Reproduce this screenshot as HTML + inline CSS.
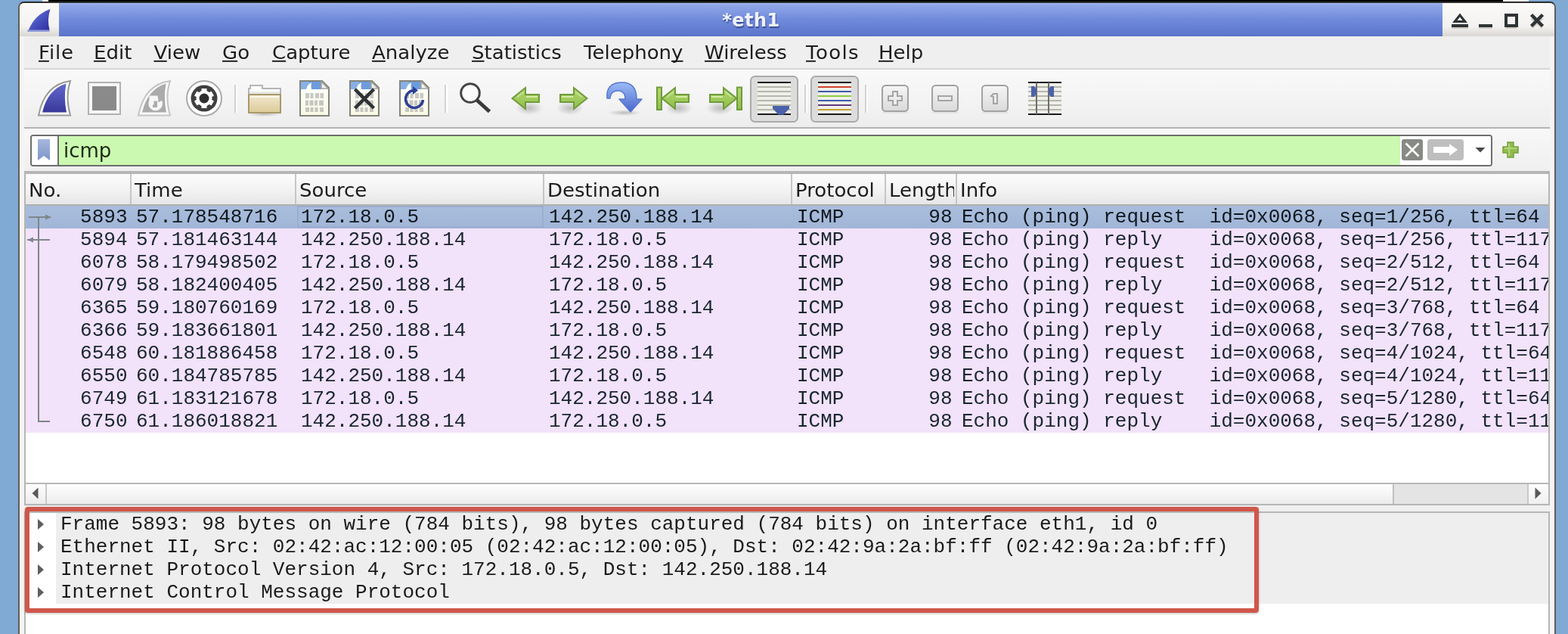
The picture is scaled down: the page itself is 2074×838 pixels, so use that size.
<!DOCTYPE html>
<html lang="en">
<head>
<meta charset="utf-8">
<title>*eth1</title>
<style>
html,body{margin:0;padding:0}
body{width:2074px;height:838px;overflow:hidden;position:relative;background:#80a9d3;font-family:"DejaVu Sans","Liberation Sans",sans-serif;font-size:26px;color:#1a1a1a;font-variant-ligatures:none}
i{display:block;position:absolute;font-style:normal}
u{text-decoration:underline;text-decoration-thickness:2px;text-underline-offset:2px;text-decoration-skip-ink:none}
.deskbits .blk{left:64px;top:0;width:1924px;height:4px;background:#000}
.deskbits .w1{left:56px;top:0;width:8px;height:3px;background:#f4f4f4}
.deskbits .w2{left:1988px;top:0;width:34px;height:3px;background:#eee}
.win{position:absolute;left:24px;top:2px;width:2034px;height:850px;box-sizing:border-box;border:2px solid #605e59;border-top-color:#2c2c2c;border-radius:8px 8px 0 0;background:#f5f4f2;overflow:hidden}
/* inside .win the origin is x=26,y=4 in page coords */
.title{position:absolute;left:0;top:0;width:2030px;height:44px;background:linear-gradient(#fbfaf9,#f3f2f0 70%,#d9d7d3)}
.ticon{position:absolute;left:0;top:0;width:52px;height:44px}
.tgrad{position:absolute;left:52px;top:0;width:1830px;height:44px;background:linear-gradient(#a6b9f0 0,#90a7e7 6%,#708adb 50%,#5c77cb 95%,#5570c3 100%)}
.ttext{position:absolute;left:0;width:1830px;top:9px;text-align:center;font-weight:bold;font-size:24px;line-height:28px;color:rgba(255,255,255,.92);text-shadow:1px 2px 1px #3b4f9a;letter-spacing:.5px;text-indent:1px}
.tbtns{position:absolute;left:1882px;top:0;width:148px;height:44px}
.menubar{position:absolute;left:6px;top:44px;width:2018px;height:42px;background:#efefef;border-bottom:2px solid #d6d6d6}
.mi{position:absolute;top:6px;line-height:30px;white-space:nowrap;color:#1c1c1c;transform:scaleY(.95);transform-origin:0 24px}
.toolbar{position:absolute;left:6px;top:88px;width:2018px;height:76px;background:linear-gradient(#f9f9f9,#f4f4f4 50%,#ededed);border-bottom:2px solid #b4b4b4}
.filterbar{position:absolute;left:6px;top:166px;width:2018px;height:56px;background:linear-gradient(#f8f8f8,#efefef)}
.fbox{position:absolute;left:8px;top:8px;width:1934px;height:42px;box-sizing:border-box;border:2px solid #6e6e6e;border-radius:4px;background:#fff;overflow:hidden}
.fbm{position:absolute;left:0;top:0;width:36px;height:38px;background:#fff}
.ftext{position:absolute;left:36px;top:0;width:1774px;height:38px;background:#ccf9b1;line-height:38px;text-indent:6px;color:#1c2a12}
.fright{position:absolute;left:1810px;top:0;width:120px;height:38px;background:#fff}
.plist{position:absolute;left:6px;top:222px;width:2018px;height:442px;box-sizing:border-box;border:2px solid #b6b6b6;border-top-width:4px;background:#fff;overflow:hidden}
.phead{position:absolute;left:0;top:0;width:2014px;height:40px;background:linear-gradient(#fcfcfc,#f2f2f2 55%,#e6e6e6);border-bottom:2px solid #b0b0ae}
.hc{position:absolute;top:6px;letter-spacing:0;margin-left:-1px;line-height:30px;white-space:nowrap;color:#1c1c1c;transform:scaleY(.95);transform-origin:0 24px}
.hs{top:0;width:2px;height:40px;background:#c6c6c6}
.prows{position:absolute;left:0;top:42px;width:2014px;height:370px;font-family:"Liberation Mono","DejaVu Sans Mono",monospace;font-size:26px;color:#18262e}
.pr{position:absolute;left:0;width:2014px;height:30px;background:#f2e2fa;white-space:pre;overflow:hidden}
.pr.sel{background:linear-gradient(#a9bddc,#a1b6d7);color:#10181e}
.c{position:absolute;top:0;line-height:30px;white-space:pre}
.no{left:0;width:134.500px;text-align:right}
.tm{left:146px}
.sr{left:364px}
.ds{left:692px}
.pt{left:1020px}
.ln{left:1138px;width:87.500px;text-align:right}
.inf{left:1238px}
.focus{position:absolute;left:359px;top:0;width:326px;height:29px;box-sizing:border-box;border:2px solid #9aaed0;background:transparent}
.rel{position:absolute;left:0;top:0}
.hscroll{position:absolute;left:0;top:408px;width:2014px;height:26px;border-top:2px solid #b8b8b8;background:linear-gradient(#fdfdfd,#f4f4f4 60%,#ebebeb)}
.hscroll .sl{position:absolute;left:0;top:0;width:26px;height:26px;border-right:2px solid #c8c8c8}
.hscroll .str{position:absolute;left:1808px;top:0;width:178px;height:26px;background:#e4e4e4;border-left:2px solid #c0c0c0;box-sizing:border-box}
.hscroll .srb{position:absolute;left:1986px;top:0;width:28px;height:26px;border-left:2px solid #c8c8c8;box-sizing:border-box;background:linear-gradient(#fdfdfd,#f0f0f0)}
.pdet{position:absolute;left:6px;top:672px;width:2018px;height:200px;box-sizing:border-box;border:2px solid #b6b6b6;background:#fff;overflow:hidden;font-family:"Liberation Mono","DejaVu Sans Mono",monospace;font-size:26px;color:#1a1a1a}
.dr{position:absolute;left:0;width:2014px;height:30px;white-space:pre}
.dr .dt{position:absolute;left:40px;top:0;width:1974px;height:30px;line-height:30px;background:#eee;text-indent:6px}
.tri{left:16px;top:7.500px;width:0;height:0;border-left:8px solid #5e5e5e;border-top:7.500px solid transparent;border-bottom:7.500px solid transparent}
.redbox{position:absolute;left:33px;top:670px;width:1632px;height:140px;box-sizing:border-box;border:6px solid #cf574a;border-radius:4px;box-shadow:0 1px 3px rgba(0,0,0,.25)}
.tb{position:absolute;left:0;top:0}
.ticon svg,.tbtns svg,.fbm svg,.fright svg{position:absolute;left:0;top:0}
.fplus{position:absolute;left:1952px;top:14px;width:28px;height:28px}
.fbm{border-right:2px solid #707070;width:34px !important}
.scr{position:absolute;left:0;top:0;width:2074px;height:838px;will-change:transform}
.desk{position:absolute;left:-30px;top:-30px;width:2134px;height:898px;background:#80a9d3}
.deskbits .blk{top:-30px !important;height:34px !important}
.deskbits .w1,.deskbits .w2{top:-30px !important;height:33px !important}
.cbg{position:absolute;left:6px;top:44px;width:2018px;height:900px;background:#efefef}
.hscroll svg{position:absolute;left:0;top:0}
</style>
</head>
<body>
<div class="scr">
<div class="desk"></div>
<div class="deskbits"><i class="blk"></i><i class="w1"></i><i class="w2"></i></div>
<div class="win">
<div class="cbg"></div>
<div class="title"><div class="ticon"><svg width="52" height="44" viewBox="26 4 52 44"><defs><linearGradient id="gtf" x1="0" y1="0" x2="1" y2="1"><stop offset="0" stop-color="#7a8ee0"/><stop offset=".5" stop-color="#4a54c0"/><stop offset="1" stop-color="#2e2e9c"/></linearGradient></defs><path d="M37 39H65.500V42H36Z" fill="#8f9cd8"/><path d="M38 39.500Q46 19 66.500 12Q62 26 65.500 39.500Z" fill="url(#gtf)"/></svg></div><div class="tgrad"><span class="ttext">*eth1</span></div><div class="tbtns"><svg width="148" height="44" viewBox="1908 4 148 44"><g fill="none" stroke="#cfcbc4" stroke-width="4"><path d="M1920 36h22M1956 36h18M1992 36h14M2026 24l14 12M2040 24l-14 12"/></g><g fill="none" stroke="#2e3436" stroke-width="4"><path d="M1920 34h22M1956 34h18"/><rect x="1992" y="20" width="14" height="14"/><path d="M1921 30L1931 17.500L1941 30ZM1927.500 27L1931 22.500L1934.500 27Z" fill="#2e3436" fill-rule="evenodd" stroke="none"/><path d="M2025.500 19.500l15 15M2040.500 19.500l-15 15" stroke-width="4.500"/></g></svg></div></div>
<div class="menubar">
<span class="mi" style="left:18px;letter-spacing:.8px;margin-left:1px"><u>F</u>ile</span>
<span class="mi" style="left:92px"><u>E</u>dit</span>
<span class="mi" style="left:170px;margin-left:1.5px"><u>V</u>iew</span>
<span class="mi" style="left:262px"><u>G</u>o</span>
<span class="mi" style="left:328px"><u>C</u>apture</span>
<span class="mi" style="left:460px"><u>A</u>nalyze</span>
<span class="mi" style="left:592px"><u>S</u>tatistics</span>
<span class="mi" style="left:740px">Telephon<u>y</u></span>
<span class="mi" style="left:900px"><u>W</u>ireless</span>
<span class="mi" style="left:1034px;letter-spacing:1.4px"><u>T</u>ools</span>
<span class="mi" style="left:1130px"><u>H</u>elp</span>
</div>
<div class="toolbar">
<svg class="tb" width="2018" height="76" viewBox="32 92 2018 76">
<defs>
<linearGradient id="gfin" x1="0" y1="0" x2="0" y2="1"><stop offset="0" stop-color="#6468cc"/><stop offset="1" stop-color="#38389a"/></linearGradient>
<linearGradient id="gfold" x1="0" y1="0" x2="0" y2="1"><stop offset="0" stop-color="#f1e8d0"/><stop offset="1" stop-color="#dccb98"/></linearGradient>
<linearGradient id="gdoc" x1="0" y1="0" x2="0" y2="1"><stop offset="0" stop-color="#ffffff"/><stop offset="1" stop-color="#f8f8e4"/></linearGradient>
<linearGradient id="ggrn" x1="0" y1="0" x2="0" y2="1"><stop offset="0" stop-color="#b4d872"/><stop offset="1" stop-color="#8fbe48"/></linearGradient>
<linearGradient id="gblu" x1="0" y1="0" x2="0" y2="1"><stop offset="0" stop-color="#9cbcf6"/><stop offset="1" stop-color="#4a66cc"/></linearGradient>
<linearGradient id="gbtn" x1="0" y1="0" x2="0" y2="1"><stop offset="0" stop-color="#f6f6f6"/><stop offset="1" stop-color="#dadada"/></linearGradient>
<radialGradient id="gsh"><stop offset="0" stop-color="#000" stop-opacity=".22"/><stop offset="1" stop-color="#000" stop-opacity="0"/></radialGradient>
<g id="doc"><path d="M1 1H30L39 10V47H1Z" fill="url(#gdoc)" stroke="#84847a" stroke-width="2" stroke-linejoin="miter"/><path d="M2 2H29V12H2Z" fill="#6d9cdc"/><path d="M2 2H13V12H2Z" fill="#86b0e6"/><path d="M9 12Q11 5 16 3Q15 8 16 12Z" fill="#fff"/><path d="M29 2V11H38Z" fill="#f4f4ee" stroke="#a4a49c" stroke-width="1.500"/><g fill="#9c9c9c" opacity=".55"><path d="M8 17h5v7H8zM14.500 17h4v7h-4zM21 17h5v7h-5zM27.500 17h4.500v7h-4.500zM8 26.500h4v7H8zM13.500 26.500h5v7h-5zM20 26.500h4v7h-4zM26 26.500h6v7h-6zM8 36h5v6H8zM14.500 36h4v6h-4zM20.500 36h4v6h-4zM27 36h5v6h-5z"/></g></g>
<g id="zb"><rect x="1" y="1" width="34" height="34" rx="4.500" fill="url(#gbtn)" stroke="#a2a2a2" stroke-width="2"/><path d="M1 37h34" stroke="#e4e4e4" stroke-width="2"/></g>
<g id="arr"><ellipse cx="24" cy="29" rx="18" ry="9" fill="url(#gsh)"/><path d="M1.500 16L19 2V11H37V21H19V30Z" fill="url(#ggrn)" stroke="#6f9b3c" stroke-width="2" stroke-linejoin="miter"/><path d="M20 14H35" stroke="#d4eaa8" stroke-width="2"/><path d="M16.500 7.500L8 14.500" stroke="#c4e092" stroke-width="2"/></g>
<g id="bar"><rect x="1" y="1.500" width="6" height="29.500" fill="url(#ggrn)" stroke="#6f9b3c" stroke-width="2"/></g>
<g id="glines" stroke="#b6b6aa" stroke-width="2"><path d="M0 7h44M0 13h44M0 19h44M0 25h44M0 31h44M0 37h44"/></g>
</defs>
<!-- 1 start capture fin -->
<path d="M51 152.500Q59 111.500 93 107Q86 128 93 152.500Z" fill="#fff" stroke="#9a9a9a" stroke-width="2" stroke-linejoin="miter"/>
<path d="M56 148.500Q63 118 87.500 110.500Q84 129 88 148.500Z" fill="url(#gfin)"/>
<!-- 2 stop -->
<rect x="117" y="109" width="42" height="42" fill="#f6f6f6" stroke="#b2b2b2" stroke-width="2"/>
<rect x="122" y="114" width="32" height="32" fill="#8a8a8a"/>
<!-- 3 restart (disabled) -->
<path d="M183 152.500Q191 111.500 225 107Q218 128 225 152.500Z" fill="#fafafa" stroke="#c4c4c4" stroke-width="2" stroke-linejoin="miter"/>
<path d="M188 148.500Q195 118 219.500 110.500Q216 129 220 148.500Z" fill="#ababab"/>
<circle cx="205.7" cy="137" r="9.3" fill="#f6f6f6"/>
<path d="M197.5 126.5H208.5V134H197.5Z" fill="#f6f6f6"/>
<path d="M203.5 133.5H208V142H202V138.5H203.5Z" fill="#ababab"/>
<path d="M209 127L214.5 132.5L209.5 135.5Z" fill="#ababab"/>
<!-- 4 options gear -->
<circle cx="270" cy="130" r="23" fill="#fff" stroke="#aaa" stroke-width="2"/>
<circle cx="270" cy="130" r="17.5" fill="#3f3f3f"/>
<g fill="#fff"><circle cx="270" cy="130" r="10.5"/><g id="teeth"><rect x="266.5" y="117" width="7" height="26"/><rect x="266.5" y="117" width="7" height="26" transform="rotate(60 270 130)"/><rect x="266.5" y="117" width="7" height="26" transform="rotate(120 270 130)"/></g></g>
<circle cx="270" cy="130" r="6.5" fill="#2e2e2e"/>
<!-- separators -->
<g><path d="M311 112V149M589 112V149M1065 112V149M1145 112V149" stroke="#d2d2d2" stroke-width="2"/><path d="M313 112V149M591 112V149M1067 112V149M1147 112V149" stroke="#fff" stroke-width="2"/></g>
<!-- 5 folder -->
<ellipse cx="350" cy="151" rx="22" ry="3" fill="url(#gsh)"/>
<path d="M329 126V117H331V113H347V117H371V126Z" fill="#fff" stroke="#b4b4bc" stroke-width="2"/><path d="M330 121H370V124H330Z" fill="#e9e9e9"/>
<rect x="329" y="125" width="42" height="24" fill="url(#gfold)" stroke="#a9996a" stroke-width="2"/>
<path d="M331 128H369" stroke="#faf5e8" stroke-width="2"/>
<!-- 6,7,8 docs -->
<use href="#doc" x="396" y="106"/>
<use href="#doc" x="462" y="106"/>
<use href="#doc" x="528" y="106"/>
<path d="M469.500 118L494.500 143M494.500 118L469.500 143" stroke="#2e3436" stroke-width="4.500"/>
<path d="M559.500 132A11.500 11.500 0 1 1 547 119.500" fill="none" stroke="#2d4096" stroke-width="3.500"/>
<path d="M546 114L553 119.500L546 125Z" fill="#2d4096"/>
<!-- 9 find -->
<circle cx="622" cy="123" r="12.300" fill="#fbfbfb" stroke="#444" stroke-width="3"/>
<path d="M631 132.500L647.500 147.500" stroke="#3a3a3a" stroke-width="5"/>
<!-- 10,11 back/forward -->
<use href="#arr" x="676" y="114"/>
<use href="#arr" transform="translate(778 114) scale(-1 1)"/>
<!-- 12 goto -->
<ellipse cx="826" cy="149" rx="22" ry="4" fill="url(#gsh)"/>
<path d="M803 130Q801 109 823 109Q842 109 842 131H849L834 148L819 131H827Q827 121 819 120Q808 119 807 130Z" fill="url(#gblu)" stroke="#5878d0" stroke-width="1.500" stroke-linejoin="round"/>
<!-- 13 first -->
<g transform="translate(874 114)"><use href="#arr"/></g>
<use href="#bar" x="868" y="114"/>
<!-- 14 last -->
<use href="#arr" transform="translate(976 114) scale(-1 1)"/>
<use href="#bar" x="974" y="114"/>
<!-- 15 autoscroll (pressed) -->
<rect x="993" y="101" width="62" height="60" rx="5.500" fill="#dcdcdc" stroke="#ababab" stroke-width="2"/>
<rect x="1002" y="108" width="44" height="44" fill="#efefeb"/>
<use href="#glines" x="1002" y="108"/>
<path d="M1002 109h44M1002 151h44" stroke="#1a1a1a" stroke-width="2"/>
<path d="M1022 140H1044V143.500L1036.500 151.500H1029.500L1022 143.500Z" fill="#4a62aa"/>
<!-- 16 colorize (pressed) -->
<rect x="1073" y="101" width="62" height="60" rx="5.500" fill="#dcdcdc" stroke="#ababab" stroke-width="2"/>
<rect x="1082" y="108" width="44" height="44" fill="#efefeb"/>
<g stroke-width="2"><path d="M1082 109h44M1082 151h44" stroke="#1a1a1a"/><path d="M1082 115h44" stroke="#d2452c"/><path d="M1082 121h44M1082 133h44" stroke="#3c5cac"/><path d="M1082 127h44" stroke="#8ecb3c"/><path d="M1082 139h44" stroke="#5e3c7c"/><path d="M1082 145h44" stroke="#c4a232"/></g>
<!-- 17,18,19 zoom -->
<use href="#zb" x="1166" y="112"/>
<use href="#zb" x="1232" y="112"/>
<use href="#zb" x="1298" y="112"/>
<path d="M1181 121H1187V127H1193V133H1187V139H1181V133H1175V127H1181Z" fill="#ececec" stroke="#a4a4a4" stroke-width="2"/>
<rect x="1241" y="127" width="18" height="6" fill="#ececec" stroke="#a4a4a4" stroke-width="2"/>
<path d="M1311 127L1314 124H1319V137H1314V128Z" fill="#ececec" stroke="#a4a4a4" stroke-width="2"/>
<!-- 20 resize columns -->
<rect x="1360" y="108" width="44" height="44" fill="#efefeb"/>
<use href="#glines" x="1360" y="108"/>
<path d="M1360 109h44M1360 151h44" stroke="#1a1a1a" stroke-width="2"/>
<path d="M1371 109V151M1387 109V151" stroke="#6e6e66" stroke-width="2"/>
<path d="M1364 114H1368L1371 118V124L1368 128H1364ZM1394 114H1390L1387 118V124L1390 128H1394Z" fill="#4a62aa"/>
</svg>
</div>
<div class="filterbar"><div class="fbox"><div class="fbm"><svg width="36" height="38" viewBox="42 180 36 38"><defs><linearGradient id="gbm" x1="0" y1="0" x2="0" y2="1"><stop offset="0" stop-color="#a8b6de"/><stop offset="1" stop-color="#7c96c8"/></linearGradient></defs><path d="M50 184H66V212L58 206L50 212Z" fill="url(#gbm)"/></svg></div><div class="ftext">icmp</div><div class="fright"><svg width="120" height="38" viewBox="1852 180 120 38"><rect x="1854" y="184" width="28" height="28" rx="3" fill="#888a85"/><path d="M1859.500 189.500L1876.500 206.500M1876.500 189.500L1859.500 206.500" stroke="#fff" stroke-width="2.600"/><rect x="1888" y="184" width="48" height="28" rx="4" fill="#bebebe"/><path d="M1896 194H1917V190L1928 198L1917 206V202H1896Z" fill="#fff"/><path d="M1951.500 195H1964.500L1958 201.500Z" fill="#4a4a4a"/></svg></div></div><div class="fplus"><svg width="28" height="28" viewBox="1984 184 28 28"><path d="M1994 188H2002V194H2008V202H2002V208H1994V202H1988V194H1994Z" fill="#90bc4c" stroke="#78a23e" stroke-width="1.500"/><path d="M1996 190V206M1990 196H2006" stroke="#b4d67c" stroke-width="2"/></svg></div></div>
<div class="plist">
<div class="phead">
<span class="hc" style="left:5px">No.</span>
<span class="hc" style="left:145px">Time</span>
<span class="hc" style="left:363px">Source</span>
<span class="hc" style="left:691px">Destination</span>
<span class="hc" style="left:1019px">Protocol</span>
<span class="hc" style="left:1143px;width:86px;overflow:hidden">Length</span>
<span class="hc" style="left:1237px">Info</span>
<i class="hs" style="left:138px"></i>
<i class="hs" style="left:356px"></i>
<i class="hs" style="left:684px"></i>
<i class="hs" style="left:1012px"></i>
<i class="hs" style="left:1136px"></i>
<i class="hs" style="left:1230px"></i>
</div>
<div class="prows">
<div class="pr sel" style="top:0px"><span class="c no">5893</span><span class="c tm">57.178548716</span><span class="c sr">172.18.0.5</span><span class="c ds">142.250.188.14</span><span class="c pt">ICMP</span><span class="c ln">98</span><span class="c inf">Echo (ping) request  id=0x0068, seq=1/256, ttl=64</span></div>
<div class="pr" style="top:30px"><span class="c no">5894</span><span class="c tm">57.181463144</span><span class="c sr">142.250.188.14</span><span class="c ds">172.18.0.5</span><span class="c pt">ICMP</span><span class="c ln">98</span><span class="c inf">Echo (ping) reply    id=0x0068, seq=1/256, ttl=117</span></div>
<div class="pr" style="top:60px"><span class="c no">6078</span><span class="c tm">58.179498502</span><span class="c sr">172.18.0.5</span><span class="c ds">142.250.188.14</span><span class="c pt">ICMP</span><span class="c ln">98</span><span class="c inf">Echo (ping) request  id=0x0068, seq=2/512, ttl=64</span></div>
<div class="pr" style="top:90px"><span class="c no">6079</span><span class="c tm">58.182400405</span><span class="c sr">142.250.188.14</span><span class="c ds">172.18.0.5</span><span class="c pt">ICMP</span><span class="c ln">98</span><span class="c inf">Echo (ping) reply    id=0x0068, seq=2/512, ttl=117</span></div>
<div class="pr" style="top:120px"><span class="c no">6365</span><span class="c tm">59.180760169</span><span class="c sr">172.18.0.5</span><span class="c ds">142.250.188.14</span><span class="c pt">ICMP</span><span class="c ln">98</span><span class="c inf">Echo (ping) request  id=0x0068, seq=3/768, ttl=64</span></div>
<div class="pr" style="top:150px"><span class="c no">6366</span><span class="c tm">59.183661801</span><span class="c sr">142.250.188.14</span><span class="c ds">172.18.0.5</span><span class="c pt">ICMP</span><span class="c ln">98</span><span class="c inf">Echo (ping) reply    id=0x0068, seq=3/768, ttl=117</span></div>
<div class="pr" style="top:180px"><span class="c no">6548</span><span class="c tm">60.181886458</span><span class="c sr">172.18.0.5</span><span class="c ds">142.250.188.14</span><span class="c pt">ICMP</span><span class="c ln">98</span><span class="c inf">Echo (ping) request  id=0x0068, seq=4/1024, ttl=64</span></div>
<div class="pr" style="top:210px"><span class="c no">6550</span><span class="c tm">60.184785785</span><span class="c sr">142.250.188.14</span><span class="c ds">172.18.0.5</span><span class="c pt">ICMP</span><span class="c ln">98</span><span class="c inf">Echo (ping) reply    id=0x0068, seq=4/1024, ttl=117</span></div>
<div class="pr" style="top:240px"><span class="c no">6749</span><span class="c tm">61.183121678</span><span class="c sr">172.18.0.5</span><span class="c ds">142.250.188.14</span><span class="c pt">ICMP</span><span class="c ln">98</span><span class="c inf">Echo (ping) request  id=0x0068, seq=5/1280, ttl=64</span></div>
<div class="pr" style="top:270px"><span class="c no">6750</span><span class="c tm">61.186018821</span><span class="c sr">142.250.188.14</span><span class="c ds">172.18.0.5</span><span class="c pt">ICMP</span><span class="c ln">98</span><span class="c inf">Echo (ping) reply    id=0x0068, seq=5/1280, ttl=117</span></div>
<div class="focus"></div>
<svg class="rel" width="60" height="300" viewBox="0 0 60 300"><g fill="none" stroke="#80868a" stroke-width="2"><path d="M17 15V285H32"/><path d="M4 15H33"/><path d="M2 45H32"/></g><path d="M26 11.500L34 15L26 18.500Z" fill="#80868a"/><path d="M10 41.500L2 45L10 48.500Z" fill="#80868a"/></svg>
</div>
<div class="hscroll"><div class="sl"></div><div class="sh"></div><div class="str"></div><div class="srb"></div><svg width="2014" height="26" viewBox="34 640 2014 26"><path d="M42.500 652L50.500 644.500V659.500Z M2038.500 652L2030.500 644.500V659.500Z" fill="#5a5a5a"/></svg></div>
</div>
<div class="pdet">
<div class="dr" style="top:0px"><i class="tri"></i><span class="dt">Frame 5893: 98 bytes on wire (784 bits), 98 bytes captured (784 bits) on interface eth1, id 0</span></div>
<div class="dr" style="top:30px"><i class="tri"></i><span class="dt">Ethernet II, Src: 02:42:ac:12:00:05 (02:42:ac:12:00:05), Dst: 02:42:9a:2a:bf:ff (02:42:9a:2a:bf:ff)</span></div>
<div class="dr" style="top:60px"><i class="tri"></i><span class="dt">Internet Protocol Version 4, Src: 172.18.0.5, Dst: 142.250.188.14</span></div>
<div class="dr" style="top:90px"><i class="tri"></i><span class="dt">Internet Control Message Protocol</span></div>
</div>
</div>
<div class="redbox"></div>
</div>
</body>
</html>
